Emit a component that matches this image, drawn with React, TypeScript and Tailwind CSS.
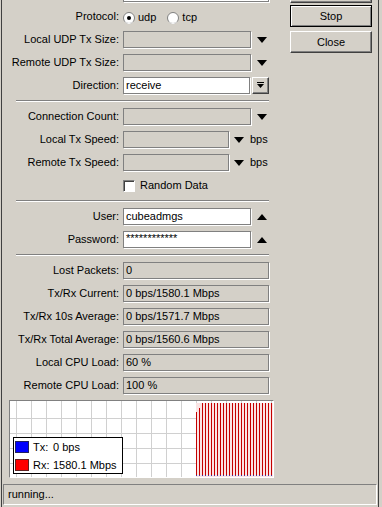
import React from 'react';

const font = { fontFamily: '"Liberation Sans", Arial, sans-serif' };

function Row({ label, children }: { label?: string; children?: React.ReactNode }) {
    return (
        <div className="flex h-[23px] items-center">
            <div className="w-[117px] shrink-0 text-right">{label}</div>
            <div className="ml-[4px] flex items-center">{children}</div>
        </div>
    );
}

// sunken read-only field
function Field({ w, white, children }: { w: string; white?: boolean; children?: React.ReactNode }) {
    return (
        <div
            className={`${w} h-[17px] border border-[#808080] shadow-[1px_1px_0_#fff] ${white ? 'bg-white' : 'bg-[#d4d0c8]'} flex items-center px-[2px] overflow-hidden whitespace-nowrap`}
        >
            {children}
        </div>
    );
}

function Arrow({ up }: { up?: boolean }) {
    return (
        <svg width="10" height="6" viewBox="0 0 10 6" className="block">
            {up ? <polygon points="0,6 10,6 5,0" fill="#000" /> : <polygon points="0,0 10,0 5,6" fill="#000" />}
        </svg>
    );
}

function Separator() {
    return <div className="ml-[14px] mt-[3px] mb-[3px] h-[2px] w-[253px] border-t border-b border-t-[#808080] border-b-white" />;
}

function Radio({ checked }: { checked?: boolean }) {
    return (
        <svg width="12" height="12" viewBox="0 0 12 12" className="block">
            <circle cx="6" cy="6" r="5.5" fill="#fff" stroke="#808080" />
            <path d="M2 9.5 A5 5 0 0 0 10 9.5" fill="none" stroke="#fff" />
            {checked && <circle cx="6" cy="6" r="2" fill="#000" />}
        </svg>
    );
}

function Chart() {
    const vlines = [] as number[];
    for (let x = 6; x < 263; x += 15) vlines.push(x);
    const hlines = [17, 32, 47, 62];
    const bars = [] as number[];
    for (let x = 186; x <= 262; x += 3) bars.push(x);
    return (
        <svg width="263" height="76" viewBox="0 0 263 76" className="block">
            <rect width="263" height="76" fill="#fff" />
            {vlines.map(x => (
                <line key={`v${x}`} x1={x + 0.5} y1="0" x2={x + 0.5} y2="76" stroke="#d0d0d0" />
            ))}
            {hlines.map(y => (
                <line key={`h${y}`} x1="0" y1={y + 0.5} x2="263" y2={y + 0.5} stroke="#d0d0d0" />
            ))}
            <rect x="186" y="2" width="77" height="74" fill="#fbe4e4" />
            {bars.map((x, i) => (
                <line
                    key={`b${x}`}
                    x1={x + 0.5}
                    y1={i === 0 ? 11 : i === 1 ? 7 : 2}
                    x2={x + 0.5}
                    y2="75"
                    stroke="#c40000"
                />
            ))}
            <line x1="186" y1="74.5" x2="263" y2="74.5" stroke="#4030a0" strokeDasharray="1 2" />
        </svg>
    );
}

export default function App() {
    return (
        <div className="w-[382px] h-[507px] bg-[#d4d0c8] overflow-hidden text-[11px] text-black" style={font}>
            <div className="ml-[1px] w-[378px] h-full border-l border-r border-[#404040] flex flex-col">
                <div className="flex">
                    {/* form column */}
                    <div className="w-[286px] shrink-0 mt-[-18px]">
                        <Row>
                            <Field w="w-[146px]" white />
                        </Row>
                        <Row label="Protocol:">
                            <div className="flex items-center mt-[2px]">
                                <Radio checked />
                                <span className="ml-[3px]">udp</span>
                                <span className="ml-[11px]"><Radio /></span>
                                <span className="ml-[3px]">tcp</span>
                            </div>
                        </Row>
                        <Row label="Local UDP Tx Size:">
                            <Field w="w-[128px]" />
                            <div className="ml-[6px]"><Arrow /></div>
                        </Row>
                        <Row label="Remote UDP Tx Size:">
                            <Field w="w-[128px]" />
                            <div className="ml-[6px]"><Arrow /></div>
                        </Row>
                        <Row label="Direction:">
                            <Field w="w-[127px]" white>receive</Field>
                            <button className="ml-[2px] w-[17px] h-[17px] bg-[#d4d0c8] border border-t-white border-l-white border-b-[#404040] border-r-[#404040] shadow-[inset_-1px_-1px_0_#808080] flex items-center justify-center">
                                <svg width="7" height="7" viewBox="0 0 7 7" className="block">
                                    <rect x="0" y="0" width="7" height="1" fill="#000" />
                                    <polygon points="0,2 7,2 3.5,6" fill="#000" />
                                </svg>
                            </button>
                        </Row>
                        <Separator />
                        <Row label="Connection Count:">
                            <Field w="w-[128px]" />
                            <div className="ml-[6px]"><Arrow /></div>
                        </Row>
                        <Row label="Local Tx Speed:">
                            <Field w="w-[106px]" />
                            <div className="ml-[5px]"><Arrow /></div>
                            <span className="ml-[6px]">bps</span>
                        </Row>
                        <Row label="Remote Tx Speed:">
                            <Field w="w-[106px]" />
                            <div className="ml-[5px]"><Arrow /></div>
                            <span className="ml-[6px]">bps</span>
                        </Row>
                        <Row>
                            <div className="w-[12px] h-[12px] bg-white border border-t-[#808080] border-l-[#808080] border-b-white border-r-white shadow-[inset_1px_1px_0_#404040] mt-[1px]" />
                            <span className="ml-[5px]">Random Data</span>
                        </Row>
                        <Separator />
                        <Row label="User:">
                            <Field w="w-[128px]" white>cubeadmgs</Field>
                            <div className="ml-[6px]"><Arrow up /></div>
                        </Row>
                        <Row label="Password:">
                            <Field w="w-[128px]" white>
                                <span className="text-[11px] leading-none -mt-[3px]">************</span>
                            </Field>
                            <div className="ml-[6px]"><Arrow up /></div>
                        </Row>
                        <Separator />
                        <Row label="Lost Packets:">
                            <Field w="w-[146px]">0</Field>
                        </Row>
                        <Row label="Tx/Rx Current:">
                            <Field w="w-[146px]">0 bps/1580.1 Mbps</Field>
                        </Row>
                        <Row label="Tx/Rx 10s Average:">
                            <Field w="w-[146px]">0 bps/1571.7 Mbps</Field>
                        </Row>
                        <Row label="Tx/Rx Total Average:">
                            <Field w="w-[146px]">0 bps/1560.6 Mbps</Field>
                        </Row>
                        <Row label="Local CPU Load:">
                            <Field w="w-[146px]">60 %</Field>
                        </Row>
                        <Row label="Remote CPU Load:">
                            <Field w="w-[146px]">100 %</Field>
                        </Row>
                    </div>

                    {/* buttons column */}
                    <div className="flex flex-col gap-[4px] mt-[-19px] ml-[2px] w-[82px]">
                        <button className="h-[22px] bg-[#d4d0c8] border border-t-white border-l-white border-b-[#404040] border-r-[#404040] shadow-[inset_-1px_-1px_0_#808080]" />
                        <button className="-mt-[2px] h-[22px] bg-[#d4d0c8] border border-black shadow-[inset_1px_1px_0_#fff,inset_-1px_-1px_0_#808080]">
                            Stop
                        </button>
                        <button className="h-[22px] bg-[#d4d0c8] border border-t-white border-l-white border-b-[#404040] border-r-[#404040] shadow-[inset_-1px_-1px_0_#808080]">
                            Close
                        </button>
                    </div>
                </div>

                {/* graph */}
                <div className="relative ml-[7px] mt-[3px] w-[265px] h-[78px] border border-t-[#808080] border-l-[#808080] border-b-white border-r-white">
                    <Chart />
                    <div className="absolute left-[3px] top-[36px] w-[110px] h-[37px] bg-white border border-black flex flex-col gap-[6px] pl-[1px] pt-[3px]">
                        <div className="flex items-center h-[12px]">
                            <div className="w-[14px] h-[12px] bg-[#0000ff] border border-[#202060]" />
                            <span className="ml-[4px] w-[20px]">Tx:</span>
                            <span>0 bps</span>
                        </div>
                        <div className="flex items-center h-[12px]">
                            <div className="w-[14px] h-[12px] bg-[#ff0000] border border-[#602020]" />
                            <span className="ml-[4px] w-[20px]">Rx:</span>
                            <span>1580.1 Mbps</span>
                        </div>
                    </div>
                </div>

                {/* status bar */}
                <div className="ml-[1px] mt-[6px] w-[374px] h-[21px] border border-t-[#808080] border-l-[#808080] border-b-white border-r-white flex items-center px-[4px]">
                    running...
                </div>
            </div>
        </div>
    );
}
